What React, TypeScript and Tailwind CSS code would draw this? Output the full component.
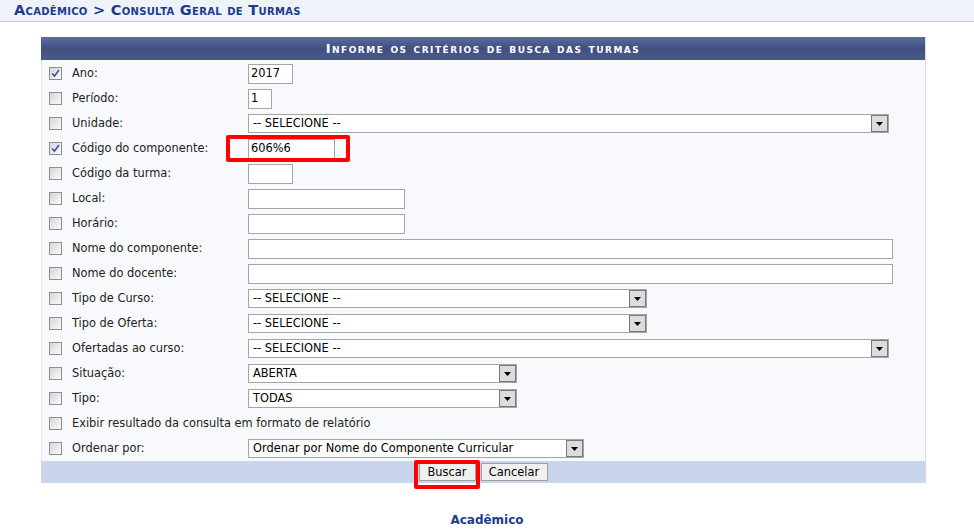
import React from 'react';

const font = "font-['DejaVu_Sans',Verdana,sans-serif]";

function CheckBox({ checked }: { checked?: boolean }) {
  return (
    <span className="flex h-[13px] w-[13px] items-center justify-center border border-[#8f8f8f] bg-gradient-to-br from-[#d6d6d6] to-[#fbfbfb]">
      {checked && (
        <svg width="9" height="9" viewBox="0 0 9 9">
          <path d="M1 4.5 L3.5 7 L8 1" fill="none" stroke="#3a4fa8" strokeWidth="1.6" />
        </svg>
      )}
    </span>
  );
}

function TextInput({ w, value }: { w: string; value?: string }) {
  return (
    <div className={`${w} flex h-[20px] items-center border border-[#a5a5a5] bg-white px-[2px] text-[11.4px] text-black`}>
      {value}
    </div>
  );
}

function Select({ w, value }: { w: string; value: string }) {
  return (
    <div className={`${w} flex h-[19px] items-center border border-[#a5a5a5] bg-white text-[11.4px] text-black`}>
      <span className="flex-1 pl-[4px] whitespace-nowrap overflow-hidden">{value}</span>
      <span className="flex h-full w-[17px] items-center justify-center border border-[#7a7a7a] bg-[#dcdcdc]">
        <svg width="7" height="4" viewBox="0 0 7 4">
          <path d="M0 0 H7 L3.5 4 Z" fill="#000" />
        </svg>
      </span>
    </div>
  );
}

type Row = {
  label: string;
  checked?: boolean;
  field?: React.ReactNode;
  full?: boolean;
  highlight?: boolean;
};

const rows: Row[] = [
  { label: 'Ano:', checked: true, field: <TextInput w="w-[45px]" value="2017" /> },
  { label: 'Período:', field: <TextInput w="w-[24px]" value="1" /> },
  { label: 'Unidade:', field: <Select w="w-[641px]" value="-- SELECIONE --" /> },
  { label: 'Código do componente:', checked: true, field: <TextInput w="w-[87px]" value="606%6" />, highlight: true },
  { label: 'Código da turma:', field: <TextInput w="w-[45px]" /> },
  { label: 'Local:', field: <TextInput w="w-[157px]" /> },
  { label: 'Horário:', field: <TextInput w="w-[157px]" /> },
  { label: 'Nome do componente:', field: <TextInput w="w-[645px]" /> },
  { label: 'Nome do docente:', field: <TextInput w="w-[645px]" /> },
  { label: 'Tipo de Curso:', field: <Select w="w-[399px]" value="-- SELECIONE --" /> },
  { label: 'Tipo de Oferta:', field: <Select w="w-[399px]" value="-- SELECIONE --" /> },
  { label: 'Ofertadas ao curso:', field: <Select w="w-[641px]" value="-- SELECIONE --" /> },
  { label: 'Situação:', field: <Select w="w-[269px]" value="ABERTA" /> },
  { label: 'Tipo:', field: <Select w="w-[269px]" value="TODAS" /> },
  { label: 'Exibir resultado da consulta em formato de relatório', full: true },
  { label: 'Ordenar por:', field: <Select w="w-[336px]" value="Ordenar por Nome do Componente Curricular" /> },
];

export default function App() {
  return (
    <div className={`${font} min-h-[530px] w-[974px] bg-white text-[11.4px] text-[#222]`}>
      <div className="h-[22px] border-b border-[#c6cfe0] bg-[#eef2f9] pl-[14px] leading-[21px]">
        <span className="text-[14.5px] tracking-[0.3px] font-bold text-[#1c3c8c] [font-variant:small-caps]">
          Acadêmico &gt; Consulta Geral de Turmas
        </span>
      </div>

      <div className="mt-[15px] ml-[41px] w-[885px] border-r border-[#dcdcdc]">
        <div className="flex h-[23px] items-center justify-center bg-gradient-to-b from-[#5b6c9f] via-[#404f80] to-[#4b5b8c] text-[13px] font-bold tracking-[1.5px] text-white [font-variant:small-caps]">
          Informe os critérios de busca das turmas
        </div>
        <div className="border-l border-[#e4e4e4] bg-[#f8f9fc] pt-[1px]">
          {rows.map((r) => (
            <div key={r.label} className="flex h-[25px] items-center">
              <div className="flex w-[30px] justify-start pl-[7px]">
                <CheckBox checked={r.checked} />
              </div>
              {r.full ? (
                <span className="whitespace-nowrap">{r.label}</span>
              ) : (
                <>
                  <span className="w-[176px] whitespace-nowrap">{r.label}</span>
                  <div className="relative">
                    {r.field}
                    {r.highlight && (
                      <div className="absolute left-[-22px] top-[-4px] h-[27px] w-[124px] rounded-[2px] border-[4px] border-[#f00]" />
                    )}
                  </div>
                </>
              )}
            </div>
          ))}
        </div>
        <div className="flex h-[22px] items-center justify-center gap-[5px] bg-[#c9d5ec]">
          <div className="relative">
            <button className="h-[18px] w-[57px] border border-[#a0a0a0] bg-[#f0f0f0] text-[11.4px] text-black">
              Buscar
            </button>
            <div className="absolute left-[-5px] top-[-3px] h-[29px] w-[66px] rounded-[2px] border-[4px] border-[#f00]" />
          </div>
          <button className="h-[18px] w-[67px] border border-[#a0a0a0] bg-[#f0f0f0] text-[11.4px] text-black">
            Cancelar
          </button>
        </div>
      </div>

      <div className="mt-[30px] text-center text-[12px] leading-[14px] font-bold text-[#1c3c8c]">Acadêmico</div>
    </div>
  );
}
